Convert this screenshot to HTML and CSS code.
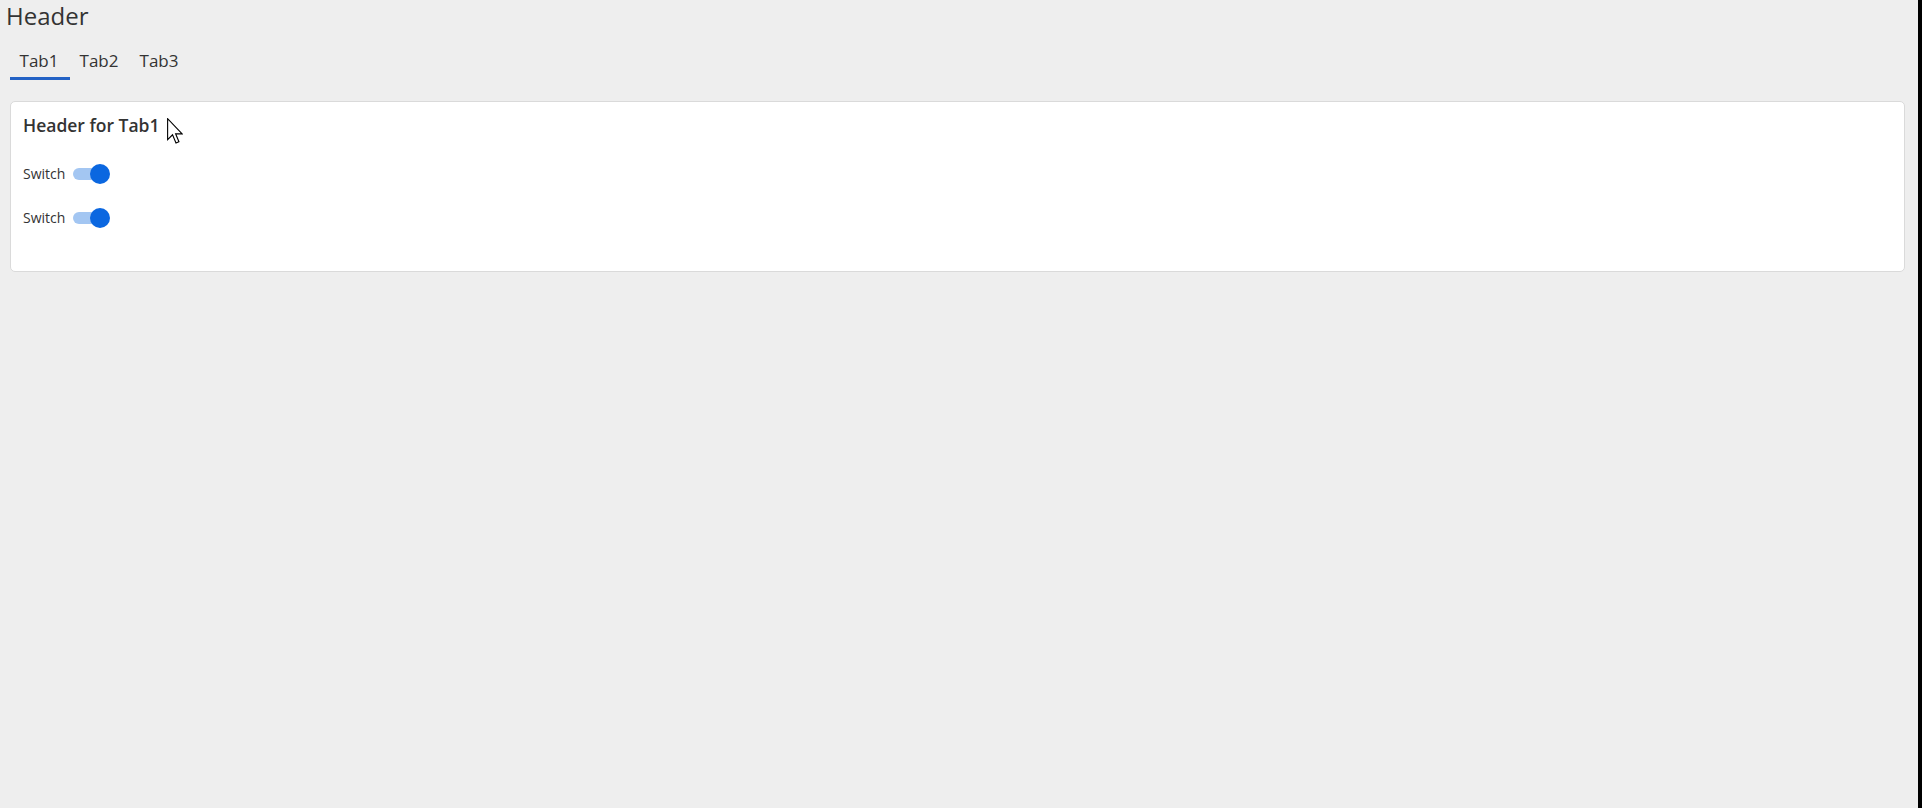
FILE: index.html
```html
<!DOCTYPE html>
<html lang="en">
<head>
<meta charset="utf-8">
<title>Header</title>
<link rel="stylesheet" href="styles.css">
</head>
<body>
  <h1 class="page-title">Header</h1>
  <nav class="tabs">
    <div class="tab tab-active">Tab1</div>
    <div class="tab">Tab2</div>
    <div class="tab">Tab3</div>
  </nav>
  <section class="card">
    <h2 class="card-title">Header for Tab1</h2>
    <div class="row">
      <span class="row-label">Switch</span>
      <span class="switch"><span class="switch-track"></span><span class="switch-knob"></span></span>
    </div>
    <div class="row">
      <span class="row-label">Switch</span>
      <span class="switch"><span class="switch-track"></span><span class="switch-knob"></span></span>
    </div>
  </section>
  <svg class="cursor" width="16" height="26" viewBox="0 0 13 21" aria-hidden="true">
    <path d="M0.5 0.5 V17.5 L4.5 13.6 L7.3 20.2 L9.7 19.2 L7 12.8 L12.3 12.8 Z" fill="#fff" stroke="#000" stroke-width="0.9" stroke-linejoin="miter"/>
  </svg>
</body>
</html>
```

FILE: styles.css
```css
html {
  background: #000;
}

body {
  margin: 0 4px 0 0;
  min-height: 100vh;
  background: #eeeeee;
  font-family: "Open Sans", "Noto Sans", "Liberation Sans", sans-serif;
  color: #333333;
  position: relative;
}

.page-title {
  margin: 0;
  padding-left: 6px;
  font-size: 24px;
  line-height: 32px;
  font-weight: 400;
  color: #333333;
}

.tabs {
  display: flex;
  margin: 11px 0 0 10px;
}

.tab {
  width: 60px;
  box-sizing: border-box;
  text-align: center;
  padding: 6px 2px 4px 0;
  font-size: 17px;
  line-height: 24px;
  color: #333333;
  border-bottom: 3px solid transparent;
}

.tab-active {
  border-bottom-color: #2362c5;
}

.card {
  margin: 21px 13px 0 10px;
  background: #ffffff;
  border: 1px solid #dadada;
  border-radius: 5px;
  padding: 11px 12px 31px;
}

.card-title {
  margin: 0 0 15px;
  font-size: 17.5px;
  line-height: 24px;
  font-weight: 600;
  color: #333333;
}

.row {
  display: flex;
  align-items: center;
  height: 44px;
}

.row-label {
  font-size: 14px;
  line-height: 20px;
  color: #333333;
  margin-right: 8px;
}

.switch {
  position: relative;
  display: inline-block;
  width: 37px;
  height: 20px;
}

.switch-track {
  position: absolute;
  left: 0;
  top: 4px;
  width: 34px;
  height: 12px;
  border-radius: 6px;
  background: #a3c6f2;
}

.switch-knob {
  position: absolute;
  left: 17px;
  top: 0;
  width: 20px;
  height: 20px;
  border-radius: 50%;
  background: #0b67e0;
}

.cursor {
  position: absolute;
  left: 167px;
  top: 118px;
}
```
